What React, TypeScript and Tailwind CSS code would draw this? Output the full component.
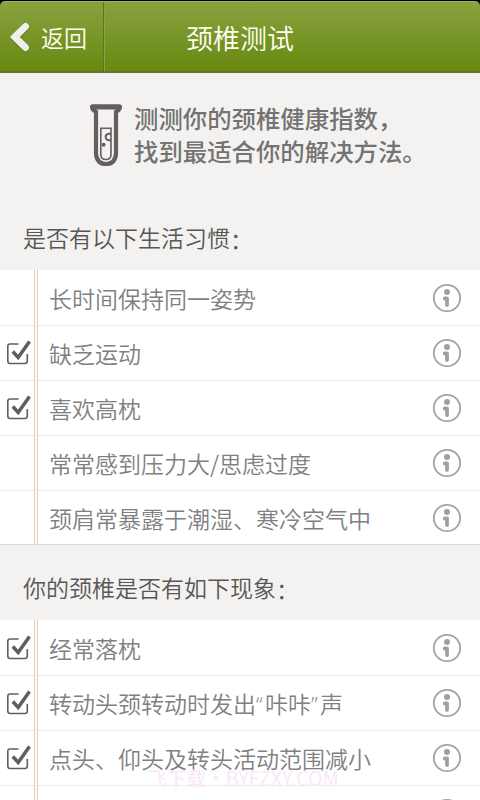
const habits = [
  { label: "长时间保持同一姿势", checked: false },
  { label: "缺乏运动", checked: true },
  { label: "喜欢高枕", checked: true },
  { label: "常常感到压力大/思虑过度", checked: false },
  { label: "颈肩常暴露于潮湿、寒冷空气中", checked: false },
]

const symptoms = [
  { label: "经常落枕", checked: true },
  { label: "转动头颈转动时发出“咔咔”声", checked: true },
  { label: "点头、仰头及转头活动范围减小", checked: true },
  { label: "", checked: false },
]

function CheckIcon() {
  return (
    <svg width="26" height="26" viewBox="0 0 26 26" fill="none" stroke="#5f5f5f">
      <path d="M12.5 4H4Q1.8 4 1.8 6.2V20.8Q1.8 23.5 4 23.5H19Q21.3 23.5 21.3 20.8V14" strokeWidth="1.6" />
      <path d="M6.8 11.5L12.2 17.5L23.5 1.5" strokeWidth="3.5" />
    </svg>
  )
}

function InfoIcon() {
  return (
    <svg width="30" height="30" viewBox="0 0 30 30" fill="none">
      <circle cx="15" cy="15" r="13.2" stroke="#a3a3a3" strokeWidth="1.8" />
      <circle cx="15" cy="9.1" r="3" fill="#a0a0a0" />
      <path d="M12.8 15.5H15V22" stroke="#a0a0a0" strokeWidth="3.8" strokeLinecap="round" strokeLinejoin="round" />
    </svg>
  )
}

function TubeIcon() {
  return (
    <svg width="32" height="64" viewBox="0 0 32 64" fill="none" stroke="#625f5e">
      <path
        d="M2.2 2.6H29.8Q30 6.2 26 7.4V50Q25 60 16 60Q7 60 6 50V7.4Q2 6.2 2.2 2.6Z"
        strokeWidth="4.2"
        strokeLinejoin="round"
      />
      <path d="M2.6 3H29.4" strokeWidth="5" strokeLinecap="round" />
      <path d="M10.8 24.2H21V50.5Q21 55.5 16 55.5Q10.8 55.5 10.8 50.5Z" strokeWidth="1.6" />
      <path d="M21 29.8H18.8Q15.6 30.3 15.6 33Q15.6 35.7 18.8 36.2H21" strokeWidth="1.9" />
      <circle cx="13.6" cy="40.8" r="2" fill="#625f5e" stroke="none" />
    </svg>
  )
}

function SectionTitle({ text }: { text: string }) {
  return (
    <h2 className="flex h-[75px] items-center bg-[#f3f2f0] pt-2.5 pl-[23px] text-[23px] font-[350] leading-none text-[#575757]">
      {text}
      <span className="relative top-[2px]">：</span>
    </h2>
  )
}

function OptionList({ items }: { items: typeof habits }) {
  return (
    <ul className="bg-white">
      {items.map((item) => (
        <li
          key={item.label}
          className="flex h-[55px] items-stretch border-t border-[#ececec] first:border-t-transparent last:border-b last:border-b-[#dedbd8]"
        >
          <div className="-mt-px flex w-[38px] shrink-0 items-center border-r border-[#e2cec3] pt-px pl-1.5">
            <div className="w-7 shrink-0">{item.checked && <CheckIcon />}</div>
            <div className="-mt-px h-[calc(100%+1px)] w-px bg-[#e2cec3]" />
            <div className="-mt-px h-[calc(100%+1px)] flex-1 bg-[#fdf9f4]" />
          </div>
          <div className="flex h-[54px] flex-1 items-center pr-[18px] pl-[11px]">
            <span className="h-[23px] flex-1 text-[23px] font-[350] leading-none whitespace-nowrap text-[#808080]">
              {item.label.split(/([“”])/).map((part, i) => (
                <span key={i} className={/[“”]/.test(part) ? "inline-block w-[9px] font-['Open_Sans'] text-[22px] leading-[0]" : ""}>
                  {part}
                </span>
              ))}
            </span>
            <InfoIcon />
          </div>
        </li>
      ))}
    </ul>
  )
}

export default function App() {
  return (
    <div
      lang="zh-CN"
      className="relative h-[800px] w-[480px] overflow-hidden bg-[#f3f2f0] font-['Noto_Sans_CJK_SC',sans-serif]"
    >
      <header className="h-[73px] bg-black pt-px">
        <div className="relative flex h-[72px] items-stretch rounded-t-[5px] border-t border-b-2 border-t-[#9caf65] border-b-[#5d752c] bg-linear-to-b from-[#89a23d] to-[#68890c] text-[#fffff0]">
          <button className="flex w-[104px] items-center border-r border-[#5c7718] pt-px pl-[9px]">
            <svg width="22" height="32" viewBox="0 0 22 32" fill="none">
              <path d="M16.5 6L6 16.5L16.5 27" stroke="#49620c" strokeOpacity="0.5" strokeWidth="8.4" strokeLinecap="round" />
              <path d="M16.5 5.5L5.8 16L16.5 26.5" stroke="#eff0eb" strokeWidth="7" strokeLinecap="round" />
            </svg>
            <span className="pl-[10px] text-[23px] font-[350] leading-none">返回</span>
          </button>
          <div className="w-px bg-[#8aa24a]" />
          <h1 className="absolute inset-0 flex items-center justify-center pt-px text-[27px] font-[350] leading-none">
            颈椎测试
          </h1>
        </div>
      </header>
      <section className="flex h-[122px] items-start gap-3 pt-[31px] pl-[90px]">
        <TubeIcon />
        <p className="-mt-[3px] text-[24.4px] leading-[33px] font-medium whitespace-nowrap text-[#737373]">
          测测你的颈椎健康指数，
          <br />
          找到最适合你的解决方法。
        </p>
      </section>
      <SectionTitle text="是否有以下生活习惯" />
      <OptionList items={habits} />
      <SectionTitle text="你的颈椎是否有如下现象" />
      <OptionList items={symptoms} />
      <div className="absolute top-[771px] left-[147px] text-[19.7px] leading-[14px] whitespace-nowrap text-[#fbe6fa]">
        飞下载・BYFZXY.COM
      </div>
    </div>
  )
}
